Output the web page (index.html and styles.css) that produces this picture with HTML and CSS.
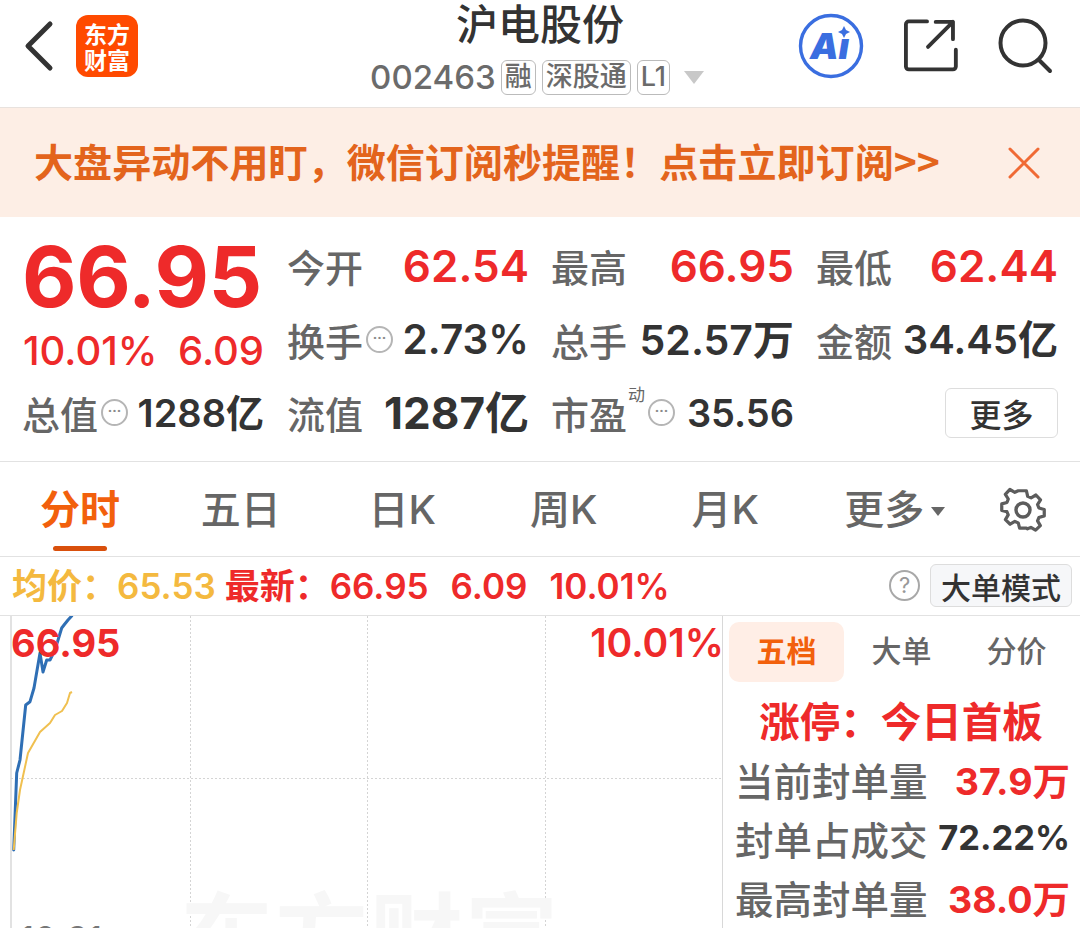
FILE: index.html
```html
<!DOCTYPE html>
<html lang="zh">
<head>
<meta charset="utf-8">
<title>沪电股份</title>
<link rel="stylesheet" href="styles.css">
</head>
<body>
<div class="page">
  <header class="top">
    <div class="top-left">
      <svg class="back" width="36" height="56" viewBox="0 0 36 56"><path d="M31 6 9 28l22 22" fill="none" stroke="#333" stroke-width="5" stroke-linecap="round" stroke-linejoin="round"/></svg>
      <div class="logo"><span>东方</span><span>财富</span></div>
    </div>
    <div class="title">
      <div class="name">沪电股份</div>
      <div class="sub"><span class="code">002463</span><span class="tag">融</span><span class="tag">深股通</span><span class="tag">L1</span><span class="tri"></span></div>
    </div>
    <div class="top-right">
      <svg width="66" height="66" viewBox="0 0 66 66"><circle cx="33" cy="33" r="30.5" fill="none" stroke="#3a6ee0" stroke-width="3.4"/><text x="12" y="46" class="ai">Aı</text><path d="M46 13l2 4 4 2-4 2-2 4-2-4-4-2 4-2z" fill="#3a6ee0"/></svg>
      <svg width="54" height="54" viewBox="0 0 54 54"><path d="M24 2.500H5a3 3 0 0 0-3 3v44a3 3 0 0 0 3 3h46a3 3 0 0 0 3-3V32M25 29 51 3M33 3h18v18" transform="scale(.96)" fill="none" stroke="#333" stroke-width="4" stroke-linecap="round" stroke-linejoin="round"/></svg>
      <svg width="56" height="56" viewBox="0 0 56 56"><circle cx="25" cy="25" r="22.500" fill="none" stroke="#333" stroke-width="4"/><path d="M41 42l11 11" fill="none" stroke="#333" stroke-width="4" stroke-linecap="round"/></svg>
    </div>
  </header>

  <div class="banner">
    <span>大盘异动不用盯，微信订阅秒提醒！点击立即订阅&gt;&gt;</span>
    <svg width="32" height="32" viewBox="0 0 32 32"><path d="M2 2l28 28M30 2 2 30" stroke="#f06a35" stroke-width="3" stroke-linecap="round"/></svg>
  </div>

  <section class="quote">
    <div class="price-block">
      <div class="price">66.95</div>
      <div class="change"><span>10.01%</span><span>6.09</span></div>
    </div>
    <div class="cell"><span class="lb">今开</span><span class="val red">62.54</span></div>
    <div class="cell"><span class="lb">最高</span><span class="val red">66.95</span></div>
    <div class="cell last"><span class="lb">最低</span><span class="val red">62.44</span></div>
    <div class="cell"><span class="lb with-info">换手<i class="info"></i></span><span class="val pct">2.73%</span></div>
    <div class="cell"><span class="lb">总手</span><span class="val">52.57万</span></div>
    <div class="cell last"><span class="lb">金额</span><span class="val amount">34.45亿</span></div>
    <div class="cell first"><span class="lb with-info">总值<i class="info"></i></span><span class="val small">1288亿</span></div>
    <div class="cell"><span class="lb">流值</span><span class="val big">1287亿</span></div>
    <div class="cell"><span class="lb with-info">市盈<sup class="dyn">动</sup><i class="info"></i></span><span class="val tight">35.56</span></div>
    <div class="cell last"><span></span><button class="more">更多</button></div>
  </section>

  <nav class="tabs">
    <a class="tab active">分时</a>
    <a class="tab">五日</a>
    <a class="tab">日K</a>
    <a class="tab">周K</a>
    <a class="tab">月K</a>
    <a class="tab more-tab">更多<i class="caret"></i></a>
    <svg class="gear" width="48" height="48" viewBox="0 0 48 48"><path d="M20 3h8l1.500 6.500 4 1.800 5.700-3.300 5.400 5.700-3.500 5.500 1.600 4.100 6.300 1.700v7.600l-6.300 1.900-1.600 3.900 3.300 5.600-5.600 5.400-5.500-3.300-4 1.700L28 47h-8l-1.600-6.200-4-1.700-5.500 3.300-5.600-5.400 3.300-5.600-1.600-3.900L-1 26.100v-7.600l6.100-1.700 1.600-4.100L3.200 7.200l5.400-5.700 5.800 3.300 4-1.800z" transform="translate(3.600 2.200) scale(.85)" fill="none" stroke="#5c5c5c" stroke-width="3.800" stroke-linejoin="round"/><circle cx="24" cy="24" r="7" fill="none" stroke="#5c5c5c" stroke-width="3.400"/></svg>
  </nav>

  <div class="info-row">
    <span class="gold">均价：65.53</span>
    <span class="red latest">最新：66.95</span>
    <span class="red">6.09</span>
    <span class="red">10.01%</span>
    <span class="spacer"></span>
    <span class="help">?</span>
    <button class="mode">大单模式</button>
  </div>

  <main class="body">
    <div class="chart">
      <svg class="plot" width="722" height="312" viewBox="0 0 722 312">
        <path d="M11 0v312" stroke="#e2e2e2" stroke-width="2"/>
        <path d="M190.500 0v312M367.500 0v312M545.500 0v312M11 162.500h711" stroke="#d4d4d4" stroke-dasharray="2 2" fill="none"/>
        <path d="M13.700 234 16.700 157 20 144 25.700 89 30 85.700 34 72 40 37 43 56 46.700 44 50 44 55 34 61.700 12 64 9 68 4 71.700 0" fill="none" stroke="#2f6fb5" stroke-width="3" stroke-linejoin="round" stroke-linecap="round"/>
        <path d="M13.700 234 16.700 197 20 174 28 137 40 116 50 107 55 99 62 95 67 87 70 77 72 76" fill="none" stroke="#f0c050" stroke-width="2" stroke-linejoin="round"/>
      </svg>
      <div class="watermark">东方财富</div>
      <div class="hi">66.95</div>
      <div class="hi-pct">10.01%</div>
      <div class="time">10:31</div>
    </div>
    <aside class="panel">
      <div class="ptabs">
        <span class="ptab on">五档</span>
        <span class="ptab">大单</span>
        <span class="ptab">分价</span>
      </div>
      <div class="limit">涨停：今日首板</div>
      <div class="prow"><span>当前封单量</span><b class="red">37.9万</b></div>
      <div class="prow"><span>封单占成交</span><b>72.22%</b></div>
      <div class="prow"><span>最高封单量</span><b class="red">38.0万</b></div>
    </aside>
  </main>
</div>
</body>
</html>
```
FILE: styles.css
```css
* { box-sizing: border-box; }
html, body { margin: 0; padding: 0; background: #fff; }
body { font-family: Inter, "Noto Sans CJK SC", sans-serif; color: #333; }
.page { width: 1080px; height: 928px; overflow: hidden; display: flex; flex-direction: column; }
.red { color: #ee2a2a; }
.gold { color: #f4b93f; }

.top { height: 108px; flex: none; display: flex; align-items: flex-start; position: relative; border-bottom: 1px solid #e8e2de; }
.top-left { display: flex; align-items: center; padding: 18px 0 0 19px; gap: 21px; width: 300px; }
.back { margin-top: -4px; }
.logo { width: 62px; height: 62px; margin-top: -3px; background: #ff4a00; border-radius: 12px; color: #fff; font-family: "Noto Sans CJK SC", sans-serif; font-size: 23px; line-height: 26px; font-weight: 700; display: flex; flex-direction: column; align-items: center; justify-content: center; }
.title { flex: 1; text-align: center; }
.name { font-size: 42px; line-height: 48px; margin-top: -2px; font-weight: 500; color: #333; font-family: "Noto Sans CJK SC", sans-serif; }
.sub { display: flex; align-items: center; justify-content: center; height: 46px; margin-top: 8px; padding-right: 6px; }
.code { font-size: 33px; font-weight: 500; color: #6b6b6b; margin-right: 5px; }
.tag { height: 35px; padding: 0 3px; border: 1.500px solid #bbb; border-radius: 6px; font-size: 27px; line-height: 32px; color: #6b6b6b; margin-right: 6px; font-weight: 500; }
.tri { width: 0; height: 0; border: 10px solid transparent; border-top: 13px solid #c8c8c8; border-bottom: 0; margin-left: 8px; }
.top-right { width: 300px; display: flex; align-items: center; gap: 40px; padding: 13px 0 0 18px; }
.ai { font: italic 900 36px Inter, sans-serif; fill: #3a6ee0; }

.banner { height: 109px; flex: none; background: #fdeee5; display: flex; align-items: center; justify-content: space-between; padding: 0 40px 6px 34px; font-size: 39.100px; font-weight: 700; color: #e3641c; font-family: "Noto Sans CJK SC", sans-serif; white-space: nowrap; }
.banner svg { margin-top: 6px; }

.quote { height: 245px; flex: none; border-bottom: 1px solid #e2e2e2; display: grid; grid-template-columns: 265px 264px 265px 242px; grid-template-rows: 74px 73px 73px; padding: 12px 0 0 22px; }
.price-block { grid-row: 1 / span 2; }
.price { font-size: 84px; line-height: 88px; font-weight: 700; color: #ee2a2a; margin-top: 4px; letter-spacing: -.4px; }
.change { display: flex; justify-content: space-between; width: 242px; font-size: 40px; line-height: 50px; font-weight: 500; color: #ee2a2a; margin-top: 5px; padding-left: 1px; }
.cell { display: flex; align-items: center; justify-content: space-between; padding-right: 22px; }
.cell.last { padding-right: 0; }
.cell.first { padding-right: 0; width: 242px; }
.lb { font-size: 38px; line-height: 50px; font-weight: 500; color: #666; font-family: "Noto Sans CJK SC", sans-serif; display: flex; align-items: center; position: relative; white-space: nowrap; }
.val { font-size: 41px; line-height: 50px; font-weight: 600; color: #333; white-space: nowrap; }
.val.red { color: #ee2a2a; font-size: 44px; }
.val.pct { font-size: 40.500px; }
.val.amount { font-size: 40px; }
.val.small { font-size: 38px; }
.val.big { font-size: 44px; font-weight: 700; }
.val.tight { font-size: 38px; }
.info { width: 27px; height: 27px; border: 2px solid #b5b5b5; border-radius: 50%; display: inline-block; margin-left: 3px; position: relative; }
.info::after { content: "···"; position: absolute; inset: 0; font: 700 15px/21px Roboto, sans-serif; font-style: normal; color: #888; text-align: center; }
.dyn { font-size: 17px; line-height: 20px; font-weight: 400; position: relative; top: -19px; margin-left: 1px; color: #666; }
.more { width: 113px; height: 50px; border: 1px solid #ddd; border-radius: 6px; background: #fff; font-size: 32px; line-height: 44px; color: #333; font-family: "Noto Sans CJK SC", sans-serif; font-weight: 500; padding: 0; }

.tabs { height: 95px; flex: none; display: flex; align-items: center; border-bottom: 1px solid #e2e2e2; position: relative; padding-bottom: 5px; }
.tab { font-size: 40px; font-weight: 500; color: #666; width: 161.500px; text-align: center; position: relative; display: block; }
.tabs .tab:first-child { width: 160px; }
.tab.more-tab { margin-left: 8px; }
.tab.active { color: #f2600c; font-weight: 700; }
.tab.active::after { content: ""; position: absolute; left: 53px; bottom: -15px; width: 54px; height: 5px; border-radius: 3px; background: #d9500c; }
.caret { display: inline-block; width: 0; height: 0; border: 7px solid transparent; border-top: 9px solid #666; border-bottom: 0; margin-left: 7px; vertical-align: 8px; }
.gear { position: absolute; left: 999px; top: 24px; }

.info-row { height: 59px; flex: none; display: flex; align-items: center; padding: 0 8px 1px 12px; gap: 22px; font-size: 35px; line-height: 44px; font-weight: 600; border-bottom: 1px solid #e2e2e2; white-space: nowrap; }
.latest { margin-left: -13px; }
.spacer { flex: 1; }
.help { width: 31px; height: 31px; border: 2.500px solid #a8a8a8; border-radius: 50%; font-size: 22px; line-height: 26px; text-align: center; color: #999; font-weight: 400; margin-right: -12px; }
.mode { width: 142px; height: 43px; background: #f6f7f9; border: 1px solid #ddd; border-radius: 6px; font-size: 30px; line-height: 40px; padding: 0; color: #333; font-family: "Noto Sans CJK SC", sans-serif; font-weight: 500; }

.body { flex: 1; display: flex; min-height: 0; }
.chart { width: 723px; height: 312px; position: relative; overflow: hidden; border-right: 1px solid #d8d8d8; flex: none; }
.plot { display: block; position: absolute; left: 0; top: 0; }
.watermark { position: absolute; left: 180px; top: 260px; font-size: 93px; line-height: 110px; letter-spacing: 2px; font-weight: 700; color: #f7f7f7; font-family: "Noto Sans CJK SC", sans-serif; white-space: nowrap; }
.hi, .hi-pct { position: absolute; top: 4px; font-size: 38px; line-height: 46px; font-weight: 700; color: #ee2a2a; }
.hi { left: 11px; }
.hi-pct { right: -2px; font-size: 39px; font-weight: 600; }
.time { position: absolute; left: 20px; top: 303px; font-size: 35px; line-height: 40px; color: #777; }

.panel { flex: 1; min-width: 0; padding: 6px 10px 0 6px; }
.ptabs { display: flex; height: 60px; align-items: center; }
.ptab { flex: none; width: 115px; height: 60px; line-height: 54px; text-align: center; font-size: 30px; font-weight: 500; color: #666; font-family: "Noto Sans CJK SC", sans-serif; }
.ptab.on { background: #ffeee6; color: #f2600c; border-radius: 10px; font-weight: 700; }
.limit { text-align: center; font-size: 40.500px; font-weight: 700; color: #ee2a2a; line-height: 58px; margin: 9px -3px 0 0; font-family: "Noto Sans CJK SC", sans-serif; white-space: nowrap; }
.prow { display: flex; justify-content: space-between; align-items: center; height: 59px; padding-left: 6px; }
.prow span { font-size: 38.500px; font-weight: 500; color: #666; font-family: "Noto Sans CJK SC", sans-serif; white-space: nowrap; }
.prow b { font-size: 34.500px; font-weight: 700; color: #333; white-space: nowrap; }
.prow b.red { color: #ee2a2a; font-size: 37.500px; }
```
